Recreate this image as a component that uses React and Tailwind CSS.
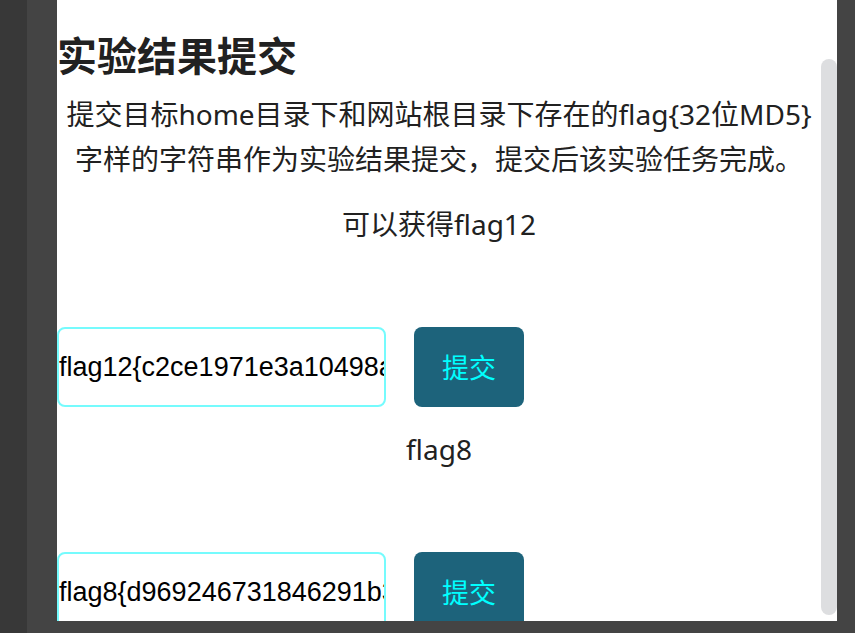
const tasks = [
  { id: "flag12", title: "可以获得flag12", value: "flag12{c2ce1971e3a10498a" },
  { id: "flag8", title: "flag8", value: "flag8{d969246731846291b3" },
];

function FlagForm({ id, title, value }) {
  return (
    <form className="mt-5" onSubmit={(event) => event.preventDefault()}>
      <label htmlFor={id} className="block text-center">
        {title}
      </label>
      <div className="mt-20 flex gap-7">
        <input
          id={id}
          type="text"
          defaultValue={value}
          className="h-20 w-[329px] rounded-lg border-2 border-[#75fbfd] bg-white font-['Liberation_Sans',sans-serif] text-[27px] text-black outline-none"
        />
        <button
          type="submit"
          className="h-20 w-[110px] rounded-lg bg-[#1d637b] text-[27px] text-[#0ff]"
        >
          提交
        </button>
      </div>
    </form>
  );
}

export default function App() {
  return (
    <div className="flex h-screen bg-[#444] font-['Noto_Sans','Noto_Sans_CJK_SC',sans-serif] text-[28px] leading-[45px] text-[#212121]">
      <div className="w-[27px] shrink-0 bg-[#383838]" />
      <main className="mr-[18px] mb-3 ml-[30px] flex min-w-0 flex-1 overflow-hidden bg-white">
        <section className="min-w-0 flex-1 pt-7">
          <h2 className="text-[40px] leading-[56px] font-bold">实验结果提交</h2>
          <p className="mt-2 text-center">
            提交目标home目录下和网站根目录下存在的flag&#123;32位MD5&#125;字样的字符串作为实验结果提交，提交后该实验任务完成。
          </p>
          {tasks.map((task) => (
            <FlagForm key={task.id} {...task} />
          ))}
        </section>
        <div className="flex w-4 shrink-0 pt-[59px] pb-1.5">
          <div className="flex-1 rounded-full bg-[#dddee0]" />
        </div>
      </main>
    </div>
  );
}
